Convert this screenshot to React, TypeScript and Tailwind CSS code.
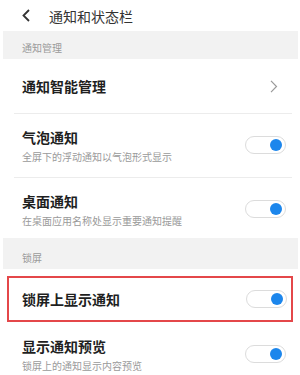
import React from "react";

const font = { fontFamily: '"Noto Sans CJK SC", "Noto Sans", sans-serif' };

function Toggle() {
  return (
    <div className="relative w-[41px] h-[18px] rounded-full border-[1.5px] border-[#dcdcdc] bg-white shrink-0">
      <div className="absolute right-[3px] top-[1.5px] w-[12px] h-[12px] rounded-full bg-[#1c86ec]" />
    </div>
  );
}

function ToggleRow({ title, sub, pt, h }: { title: string; sub: string; pt: string; h: string }) {
  return (
    <div className={`flex items-start justify-between pl-[22px] pr-[14px] ${pt} ${h}`}>
      <div className="flex flex-col">
        <div className="text-[14px] leading-[20px] font-bold text-[#1f1f1f]">{title}</div>
        <div className="text-[10px] leading-[14px] text-[#9a9a9a] mt-[3px]">{sub}</div>
      </div>
      <div className="mt-[9px]">
        <Toggle />
      </div>
    </div>
  );
}

export default function App() {
  return (
    <div className="w-[300px] h-[375px] overflow-hidden bg-white" style={font}>
      <div className="h-[31px] flex items-center">
        <svg className="ml-[21px]" width="10" height="13" viewBox="0 0 10 13">
          <path d="M8 1 L2.5 6.5 L8 12" fill="none" stroke="#333" strokeWidth="1.8" />
        </svg>
        <div className="ml-[18px] text-[14px] leading-[20px] text-[#333]">通知和状态栏</div>
      </div>
      <div className="ml-[3px] mr-[2px] h-[28px] bg-[#f2f2f2] pl-[19px] pt-[10px] text-[10px] leading-[14px] text-[#9a9a9a]">
        通知管理
      </div>
      <div className="h-[54px] flex items-center justify-between pl-[22px] pr-[22px]">
        <div className="text-[14px] leading-[20px] font-bold text-[#1f1f1f]">通知智能管理</div>
        <svg width="8" height="13" viewBox="0 0 8 13">
          <path d="M1 0.8 L6.5 6.5 L1 12.2" fill="none" stroke="#9a9a9a" strokeWidth="1.2" />
        </svg>
      </div>
      <div className="ml-[14px] mr-[8px] h-px bg-[#ececec]" />
      <ToggleRow title="气泡通知" sub="全屏下的浮动通知以气泡形式显示" pt="pt-[13px]" h="h-[63px]" />
      <div className="ml-[14px] mr-[8px] h-px bg-[#ececec]" />
      <ToggleRow title="桌面通知" sub="在桌面应用名称处显示重要通知提醒" pt="pt-[13px]" h="h-[60px]" />
      <div className="ml-[3px] mr-[2px] h-[31px] bg-[#f2f2f2] pl-[19px] pt-[13px] text-[10px] leading-[14px] text-[#9a9a9a]">
        锁屏
      </div>
      <div className="ml-[7px] mr-[7px] mt-[7px] h-[46px] border-2 border-[#e4474a] flex items-center justify-between pl-[13px] pr-[4px]">
        <div className="text-[14px] leading-[20px] font-bold text-[#1f1f1f]">锁屏上显示通知</div>
        <Toggle />
      </div>
      <ToggleRow title="显示通知预览" sub="锁屏上的通知显示内容预览" pt="pt-[14px]" h="h-[60px]" />
    </div>
  );
}
